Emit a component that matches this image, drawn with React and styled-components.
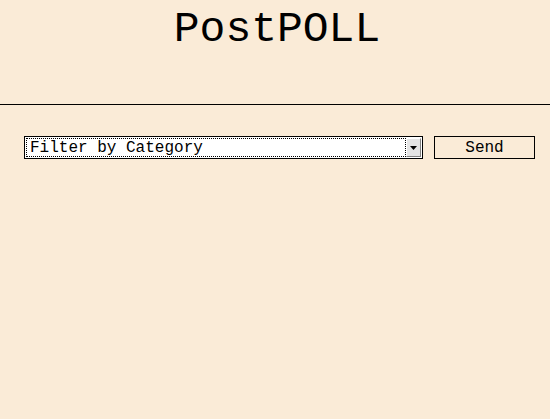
import React from "react";
import styled, { createGlobalStyle } from "styled-components";

const mono = `"Courier New", "Nimbus Mono PS", "FreeMono", "Liberation Mono", monospace`;

const GlobalStyle = createGlobalStyle`
    html, body {
        margin: 0;
        background: #faebd7;
    }
    body {
        font-family: ${mono};
        color: #000;
    }
`;

export default function App() {
    return (
        <Page>
            <GlobalStyle />
            <Header>
                <Title>PostPOLL</Title>
            </Header>
            <FilterRow>
                <SelectBox>
                    <SelectInner>
                        <SelectField defaultValue="">
                            <option value="">Filter by Category</option>
                        </SelectField>
                    </SelectInner>
                    <ArrowButton>
                        <svg width="7" height="4" viewBox="0 0 7 4">
                            <path d="M0 0h7L3.5 4z" fill="#000" />
                        </svg>
                    </ArrowButton>
                </SelectBox>
                <SendButton>Send</SendButton>
            </FilterRow>
        </Page>
    );
}

const Page = styled.div`
    min-height: 419px;
    background: #faebd7;
`;

const Header = styled.header`
    height: 104px;
    border-bottom: 1px solid #000;
    display: flex;
    justify-content: center;
`;

const Title = styled.h1`
    margin: 8px 0 0 4px;
    font-family: ${mono};
    font-weight: normal;
    font-size: 43px;
    line-height: 44px;
`;

const FilterRow = styled.div`
    display: flex;
    align-items: center;
    gap: 11px;
    padding: 31px 15px 0 24px;
`;

const SelectBox = styled.div`
    flex: 1;
    height: 23px;
    box-sizing: border-box;
    border: 1px solid #000;
    background: #fff;
    display: flex;
    padding: 1px;
`;

const SelectInner = styled.div`
    flex: 1;
    border: 1px dotted #000;
    display: flex;
    align-items: center;
`;

const SelectField = styled.select`
    appearance: none;
    -webkit-appearance: none;
    border: none;
    outline: none;
    background: transparent;
    width: 100%;
    padding: 0 0 0 3px;
    font-family: ${mono};
    font-size: 16px;
    color: #000;
`;

const ArrowButton = styled.div`
    width: 15px;
    box-sizing: border-box;
    background: #e4e4e4;
    border-top: 1px solid #fff;
    border-left: 1px solid #fff;
    border-right: 1px solid #808080;
    border-bottom: 1px solid #808080;
    display: flex;
    align-items: center;
    justify-content: center;
`;

const SendButton = styled.button`
    width: 101px;
    height: 23px;
    box-sizing: border-box;
    border: 1px solid #000;
    background: #faebd7;
    font-family: ${mono};
    font-size: 16px;
    color: #000;
    padding: 0;
`;
